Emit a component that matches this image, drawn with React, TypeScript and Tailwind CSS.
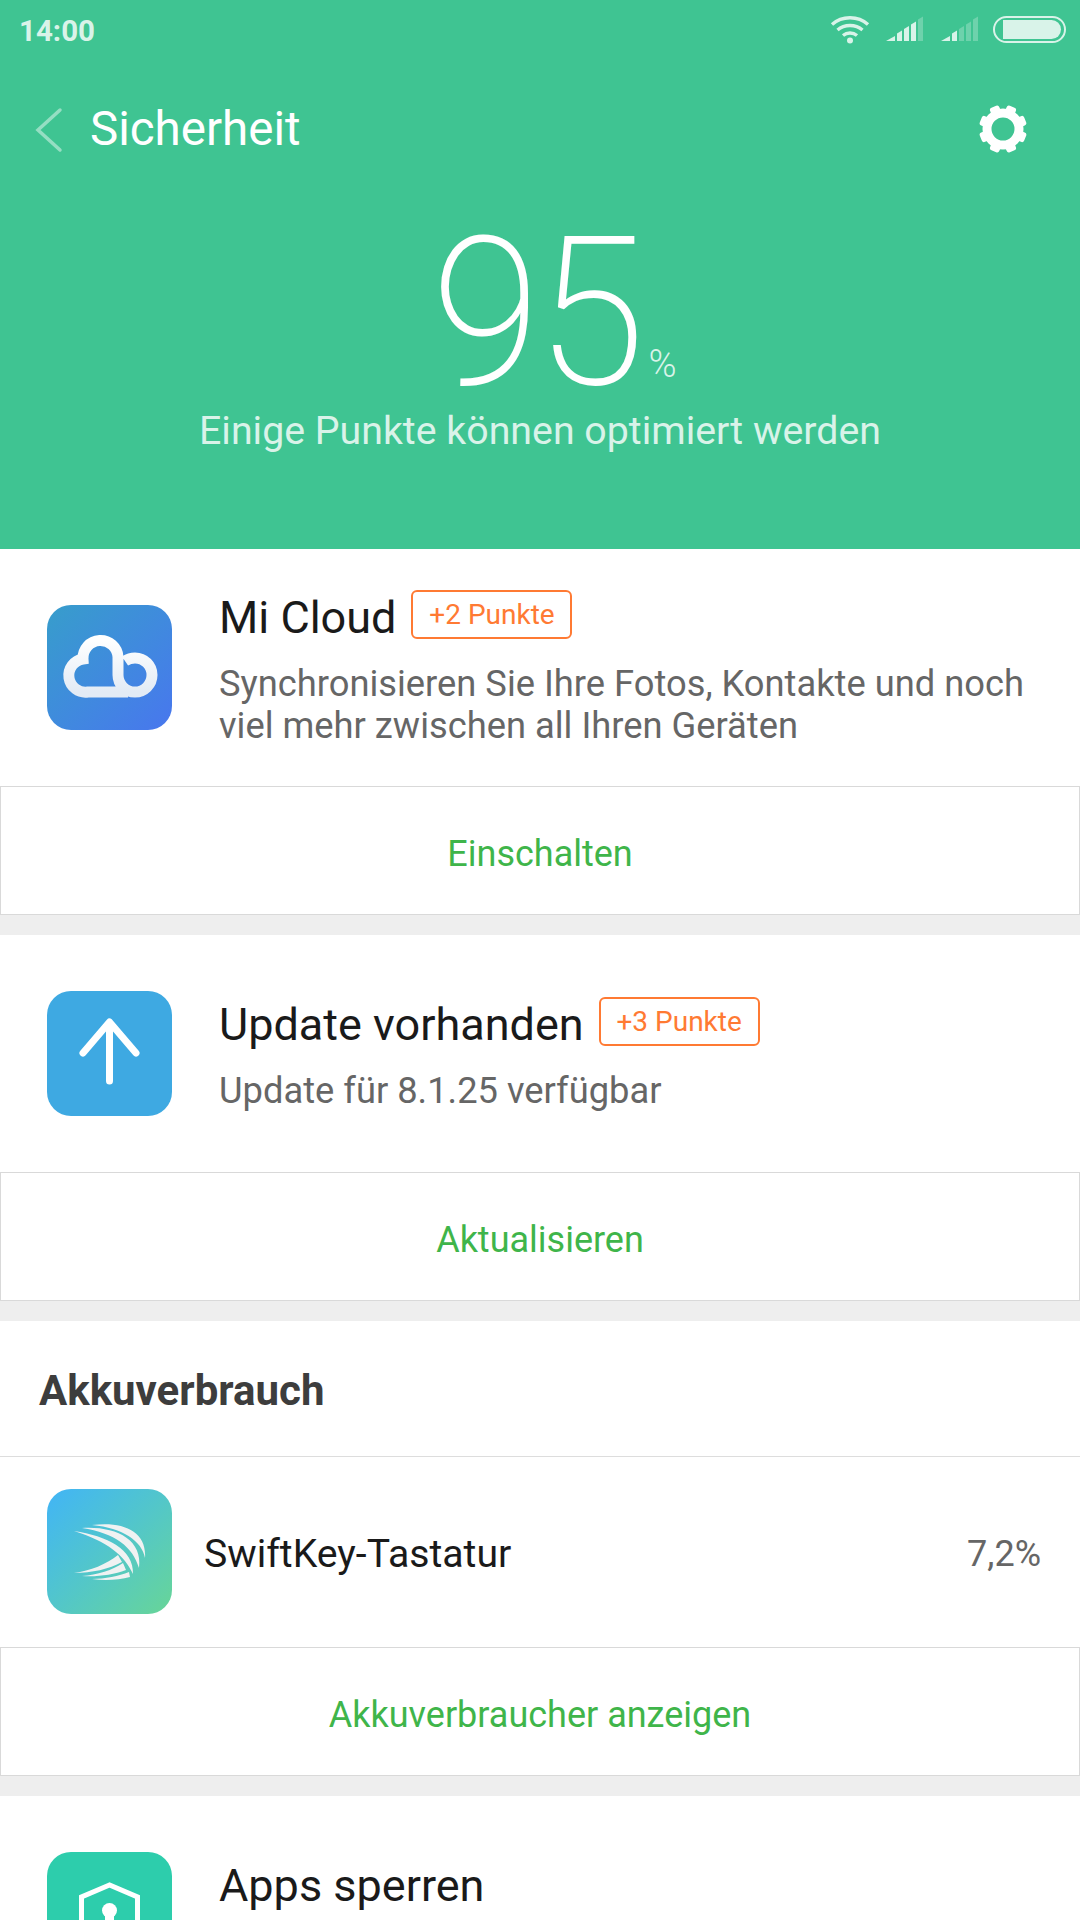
import React from "react";

const Gear = () => (
  <svg width="50" height="50" viewBox="-25 -25 50 50" className="block">
    <circle r="16" fill="none" stroke="#fff" strokeWidth="9" />
    {[22.5, 67.5, 112.5, 157.5, 202.5, 247.5, 292.5, 337.5].map((a) => (
      <rect key={a} x="-5" y="-24" width="10" height="10" rx="2.5" fill="#fff" transform={`rotate(${a})`} />
    ))}
  </svg>
);

const Wifi = () => (
  <svg width="40" height="30" viewBox="0 0 40 30" className="block">
    <g fill="none" stroke="#d9f3e9" strokeWidth="3.4">
      <path d="M2 10.5C12 1.5 28 1.5 38 10.5" />
      <path d="M7.5 16C14.5 10 25.500 10 32.500 16" />
      <path d="M13 21.500C17 18.200 23 18.200 27 21.500" />
    </g>
    <circle cx="20" cy="26.500" r="3" fill="#d9f3e9" />
  </svg>
);

const Signal = ({ on }: { on: number }) => (
  <svg width="38" height="26" viewBox="0 0 38 26" className="block">
    {[
      "M0 25L9 20V25Z",
      "M11 25V17.500L16 14.500V25Z",
      "M18 25V13L23 10V25Z",
      "M25 25V8.500L30 5.500V25Z",
      "M32 25V3.500L37 0.500V25Z",
    ].map((d, i) => (
      <path key={d} d={d} fill="#d9f3e9" fillOpacity={i < on ? 1 : 0.3} />
    ))}
  </svg>
);

const Battery = () => (
  <div className="w-[73px] h-[27px] rounded-full border-[2px] border-[#d9f3e9] flex items-center justify-end pr-[3px]">
    <div className="w-[58px] h-[19px] bg-[#d9f3e9] rounded-r-full" />
  </div>
);

const Back = () => (
  <svg width="30" height="46" viewBox="0 0 30 46" className="block">
    <path d="M26 3L4 23L26 43" fill="none" stroke="#fff" strokeOpacity="0.45" strokeWidth="3.500" strokeLinecap="round" />
  </svg>
);

const CloudIcon = () => (
  <div className="w-[125px] h-[125px] rounded-[24px] shrink-0 bg-gradient-to-br from-[#379dcb] to-[#4876ee]">
    <svg width="125" height="125" viewBox="0 0 125 125" className="block">
      <defs>
        <linearGradient id="cl" x1="0" y1="0" x2="0" y2="1">
          <stop offset="0" stopColor="#ffffff" />
          <stop offset="1" stopColor="#e3ebf5" />
        </linearGradient>
      </defs>
      <path
        d="M81 87H41A16.500 16.500 0 0 1 36 54A17 17 0 0 1 71 52V70A17 17 0 1 0 88 53C84 53 81 54 78 56"
        fill="none"
        stroke="url(#cl)"
        strokeWidth="11"
      />
    </svg>
  </div>
);

const UpdateIcon = () => (
  <div className="w-[125px] h-[125px] rounded-[24px] shrink-0 bg-[#3ea9e2]">
    <svg width="125" height="125" viewBox="0 0 125 125" className="block">
      <path d="M36 62L62.500 31L89 62M62.500 33V90" fill="none" stroke="#fff" strokeWidth="7" strokeLinecap="round" strokeLinejoin="round" />
    </svg>
  </div>
);

const SwiftIcon = () => (
  <div className="w-[125px] h-[125px] rounded-[24px] shrink-0 bg-gradient-to-br from-[#42b4f6] to-[#68d596]">
    <svg width="125" height="125" viewBox="0 0 125 125" className="block">
      <g fill="#f0f2f2">
        <path d="M45 36C76 32 100 42 98 69C95 52 76 39 45 36Z" />
        <path d="M35 39C68 37 96 50 92 79C86 58 68 44 35 39Z" />
        <path d="M27 42C60 47 87 60 86 85C78 67 60 52 27 42Z" />
        <path d="M27 84C43 82 60 75 71 66L75 73C62 80 45 84 27 84Z" />
        <path d="M35 87C50 86 66 81 76 74L79 81C66 86 50 88 35 87Z" />
        <path d="M45 90C58 90 72 87 82 83L83 88C72 91 58 92 45 90Z" />
      </g>
    </svg>
  </div>
);

const LockIcon = () => (
  <div className="w-[125px] h-[125px] rounded-[24px] shrink-0 bg-[#2dcdac]">
    <svg width="125" height="125" viewBox="0 0 125 125" className="block">
      <path d="M62.500 33L34.500 45V72C34.500 88 48 98 62.500 104C77 98 90.500 88 90.500 72V45Z" fill="none" stroke="#fff" strokeWidth="5" />
      <circle cx="62.500" cy="58.500" r="7.500" fill="#fff" />
      <rect x="58" y="60" width="9" height="24" rx="2" fill="#fff" />
    </svg>
  </div>
);

const Badge = ({ children }: { children: React.ReactNode }) => (
  <span className="ml-[15px] mt-[-7px] h-[49px] w-[161px] shrink-0 rounded-[6px] border-[2px] border-[#ff7a33] text-[#ff7a33] text-[28px] flex items-center justify-center">
    {children}
  </span>
);

const Action = ({ children }: { children: React.ReactNode }) => (
  <div className="h-[129px] pt-[6px] border border-[#d9d9d9] flex items-center justify-center text-[#3fb54a] text-[36px]">
    {children}
  </div>
);

const Gap = () => <div className="h-[20px] bg-[#eeeeee]" />;

const Card = ({
  icon,
  title,
  badge,
  desc,
}: {
  icon: React.ReactNode;
  title: string;
  badge?: string;
  desc?: React.ReactNode;
}) => (
  <div className="h-[237px] flex items-center pl-[47px]">
    {icon}
    <div className="ml-[47px] flex-1 mt-[2px]">
      <div className="flex items-center h-[56px]">
        <span className="text-[45px] leading-[56px] text-[#1a1a1a]">{title}</span>
        {badge && <Badge>{badge}</Badge>}
      </div>
      <p className="mt-[17px] text-[36.300px] leading-[42px] text-[#666666] whitespace-nowrap">{desc}</p>
    </div>
  </div>
);

export default function App() {
  return (
    <div className="w-[1080px] h-[1920px] overflow-hidden bg-white font-['Roboto',sans-serif]">
      <header className="h-[549px] bg-[#3fc492] flex flex-col">
        <div className="h-[62px] pl-[19px] pr-[14px] flex items-center">
          <span className="text-[29.500px] font-bold text-[#d9f3e9]">14:00</span>
          <div className="ml-auto flex items-center mt-[-4px]">
            <Wifi />
            <div className="ml-[16px]"><Signal on={4} /></div>
            <div className="ml-[17px]"><Signal on={2} /></div>
            <div className="ml-[14px]"><Battery /></div>
          </div>
        </div>
        <div className="h-[70px] mt-[33px] pl-[34px] pr-[52px] flex items-center">
          <Back />
          <span className="ml-[26px] text-[47.500px] text-white">Sicherheit</span>
          <div className="ml-auto mt-[-2px]"><Gear /></div>
        </div>
        <div className="mt-[74px] flex justify-center items-end">
          <span className="text-[207px] leading-[150px] font-extralight tracking-[-5px] text-white scale-x-[0.96] ml-[-5px]">95</span>
          <span className="text-[38px] leading-[33px] mb-[8px] ml-[4px] font-light text-[#d9f3e9] w-0 overflow-visible">%</span>
        </div>
        <p className="text-center text-[39.300px] leading-[44px] mt-[20px] text-[#d9f3e9] font-normal">
          Einige Punkte können optimiert werden
        </p>
      </header>

      <Card
        icon={<CloudIcon />}
        title="Mi Cloud"
        badge="+2 Punkte"
        desc={<>Synchronisieren Sie Ihre Fotos, Kontakte und noch<br />viel mehr zwischen all Ihren Geräten</>}
      />
      <Action>Einschalten</Action>
      <Gap />

      <Card icon={<UpdateIcon />} title="Update vorhanden" badge="+3 Punkte" desc="Update für 8.1.25 verfügbar" />
      <Action>Aktualisieren</Action>
      <Gap />

      <div className="h-[136px] pt-[4px] border-b border-[#dddddd] flex items-center pl-[39px]">
        <h2 className="text-[42px] font-bold text-[#3d3d3d]">Akkuverbrauch</h2>
      </div>
      <div className="h-[190px] flex items-center pl-[47px] pr-[39px] pb-[1px]">
        <SwiftIcon />
        <span className="ml-[32px] mt-[5px] text-[39.200px] text-[#1a1a1a]">SwiftKey-Tastatur</span>
        <span className="ml-auto mt-[5px] text-[36px] text-[#666666]">7,2%</span>
      </div>
      <Action>Akkuverbraucher anzeigen</Action>
      <Gap />

      <div className="flex items-start pl-[47px] pt-[56px]">
        <LockIcon />
        <span className="ml-[47px] mt-[6px] text-[45px] leading-[56px] text-[#1a1a1a]">Apps sperren</span>
      </div>
    </div>
  );
}
